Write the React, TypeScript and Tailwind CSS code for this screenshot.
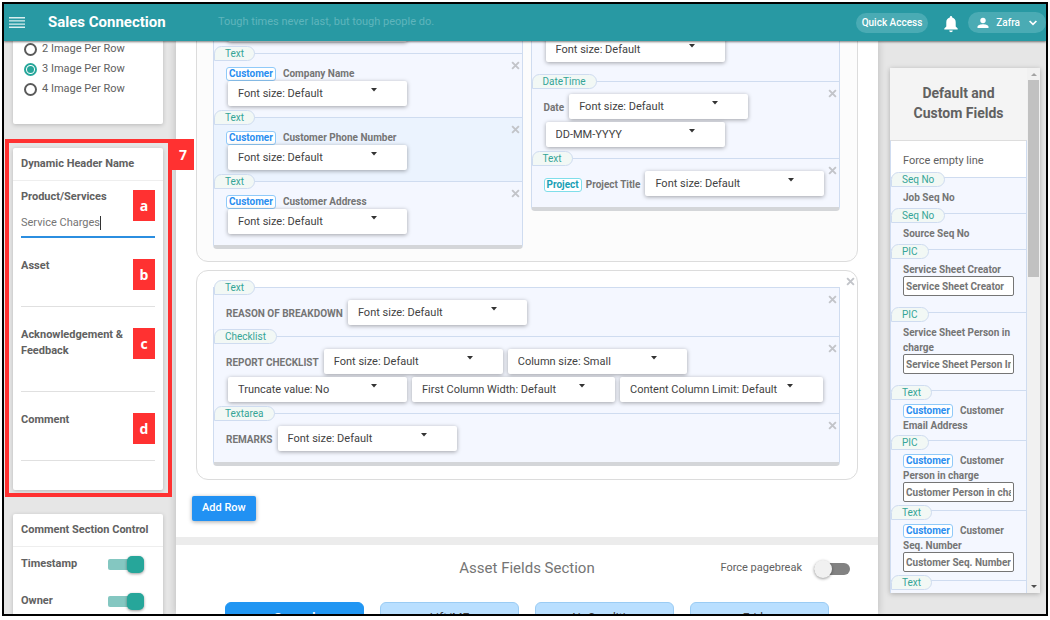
import React from "react";

const TAG_TONES = {
  customer: "border-[#90caf9] text-[#2b8ef0]",
  project: "border-[#80deea] text-[#1a9fb5]",
};

type Tone = keyof typeof TAG_TONES;

function Tag({ tone, children }: { tone: Tone; children: React.ReactNode }) {
  return (
    <span className={`inline-block rounded-[3px] border bg-white px-[2px] text-[10px] leading-3 font-bold ${TAG_TONES[tone]}`}>
      {children}
    </span>
  );
}

function TypeChip({ children }: { children: React.ReactNode }) {
  return (
    <span className="block h-[15px] w-fit rounded-lg rounded-bl-none border border-[#cfdcf0] bg-[#f2f8f5] px-[10px] text-[10px] leading-[14px] text-[#35a597]">
      {children}
    </span>
  );
}

function Close({ className }: { className: string }) {
  return (
    <button type="button" aria-label="Remove" className={`absolute text-[#c2c4c9] ${className}`}>
      <svg viewBox="0 0 8 8" className="size-[9px]" stroke="currentColor" strokeWidth="1.7">
        <path d="M1 1l6 6M7 1L1 7" />
      </svg>
    </button>
  );
}

function Dropdown({ value, wide = false }: { value: string; wide?: boolean }) {
  return (
    <span className={`relative block ${wide ? "w-[203px]" : "w-[179px]"}`}>
      <select
        aria-label={value}
        className="block h-[25px] w-full appearance-none rounded-[2px] bg-white px-[10px] pt-0.5 text-[11px] text-[#424242] shadow-[0_1px_4px_rgba(0,0,0,0.35)]"
      >
        <option>{value}</option>
      </select>
      <svg viewBox="0 0 6 4" className="pointer-events-none absolute top-[7px] right-[30px] h-1 w-1.5" fill="#333">
        <path d="M0 0h6L3 3.6z" />
      </svg>
    </span>
  );
}

function Field({
  type,
  tone,
  tag,
  name,
  stacked = false,
  active = false,
  children,
}: {
  type: string;
  tone?: Tone;
  tag?: string;
  name: string;
  stacked?: boolean;
  active?: boolean;
  children: React.ReactNode;
}) {
  return (
    <div className={`relative border-t border-[#cfdcf0] pb-[11px] ${active ? "bg-[#ebf3fe]" : "bg-[#f4f7ff]"}`}>
      <div className="-mt-2 h-4">
        <TypeChip>{type}</TypeChip>
      </div>
      <Close className="top-[7px] right-0.5" />
      <div className={`flex flex-wrap items-center gap-x-[5px] pl-[14px] ${stacked ? "pt-[4px]" : "gap-y-[3px] pt-1"}`}>
        <span className={`-ml-0.5 flex items-center text-[10px] leading-[15px] font-bold text-[#757575] ${stacked ? "w-full gap-[7px]" : "gap-1 pt-0.5"}`}>
          {tone && <Tag tone={tone}>{tag}</Tag>}
          {name}
        </span>
        {children}
      </div>
    </div>
  );
}

const COLUMN = "rounded-b-[4px] border-x border-b-4 border-x-[#cfdcf0] border-b-[#d4d6d9]";

function Switch({ label }: { label: string }) {
  return (
    <label className="flex h-[37px] items-center justify-between pr-[19px] pb-[3px] pl-2 text-[11px] font-bold text-[#616161]">
      {label}
      <input
        type="checkbox"
        defaultChecked
        className="relative h-[11px] w-9 appearance-none rounded-[2px] bg-[#84c7c1] before:absolute before:-top-[3px] before:right-0 before:size-[17px] before:rounded-[5px] before:bg-[#26a69a] before:shadow-[0_1px_3px_rgba(0,0,0,0.4)]"
      />
    </label>
  );
}

function Marker({ className, children }: { className: string; children: React.ReactNode }) {
  return (
    <span className={`absolute grid h-[31px] w-[22px] place-items-center bg-[#ff3131] font-['Open_Sans',sans-serif] text-[14px] font-bold text-white ${className}`}>
      {children}
    </span>
  );
}

function HeaderName({ label, marker, value }: { label: string; marker: string; value?: string }) {
  return (
    <div className="relative">
      <label htmlFor={`header-${marker}`} className="block w-28 text-[11px] leading-4 font-bold text-[#616161]">
        {label}
      </label>
      <div className={`flex h-[33px] items-center ${value ? "border-b-2 border-[#2b8ee0]" : "border-b border-[#e0e0e0]"}`}>
        <input
          id={`header-${marker}`}
          defaultValue={value}
          className={`pt-[5px] text-[11px] text-[#757575] outline-none ${value ? "[field-sizing:content]" : "w-full"}`}
        />
        {value && <span className="mt-1 h-[14px] w-px bg-[#333]" />}
      </div>
      <Marker className="top-px right-0">{marker}</Marker>
    </div>
  );
}

const CARD = "rounded-[2px] bg-white shadow-[0_1px_4px_rgba(0,0,0,0.2)]";
const CARD_TITLE = "flex h-[33px] items-center border-b border-[#eeeeee] px-2 text-[11px] font-bold text-[#616161]";

function Sidebar() {
  return (
    <aside className="z-10 flex w-[172px] shrink-0 flex-col gap-6 pr-[13px] pl-[9px]">
      <div className={`${CARD} -mt-2 px-[11px] pt-1.5 pb-[25px]`}>
        {[2, 3, 4].map((n) => (
          <label key={n} className="flex h-5 items-center gap-[5px] text-[11px] text-[#616161]">
            <input
              type="radio"
              name="images"
              defaultChecked={n === 3}
              className="grid size-[13px] appearance-none place-items-center rounded-full border-2 border-[#5a5a5a] checked:border-[#26a69a] checked:before:size-[7px] checked:before:rounded-full checked:before:bg-[#26a69a]"
            />
            {n} Image Per Row
          </label>
        ))}
      </div>

      <div className="relative">
        <div className={CARD}>
          <h2 className={CARD_TITLE}>Dynamic Header Name</h2>
          <div className="flex flex-col gap-5 px-2 pt-2 pb-[29px]">
            <HeaderName label="Product/Services" marker="a" value="Service Charges" />
            <HeaderName label="Asset" marker="b" />
            <HeaderName label="Acknowledgement & Feedback" marker="c" />
            <HeaderName label="Comment" marker="d" />
          </div>
        </div>
        <div className="pointer-events-none absolute -top-[9px] -right-[9px] -bottom-[7px] -left-2 border-4 border-[#ff3131]">
          <Marker className="-top-1 left-full ml-1">7</Marker>
        </div>
      </div>

      <div className={CARD}>
        <h2 className={CARD_TITLE}>Comment Section Control</h2>
        <Switch label="Timestamp" />
        <Switch label="Owner" />
      </div>
    </aside>
  );
}

const FONT = "Font size: Default";

function Main() {
  return (
    <main className="min-w-0 flex-1 bg-[#ececec] shadow-[0_0_8px_rgba(0,0,0,0.2)]">
      <section className="bg-white px-5 pb-4">
        <div className="-mt-[25px] grid grid-cols-2 items-start gap-2 rounded-b-xl border border-[#dcdcdc] bg-[#fcfcfc] pr-[17px] pb-3 pl-4">
          <div className={COLUMN}>
            <div className="bg-[#f4f7ff] pb-[11px] pl-[14px]">
              <Dropdown value={FONT} />
            </div>
            <Field type="Text" tone="customer" tag="Customer" name="Company Name" stacked>
              <Dropdown value={FONT} />
            </Field>
            <Field type="Text" tone="customer" tag="Customer" name="Customer Phone Number" stacked active>
              <Dropdown value={FONT} />
            </Field>
            <Field type="Text" tone="customer" tag="Customer" name="Customer Address" stacked>
              <Dropdown value={FONT} />
            </Field>
          </div>
          <div className={COLUMN}>
            <div className="bg-[#f4f7ff] pt-5 pb-[19px] pl-[14px]">
              <Dropdown value={FONT} />
            </div>
            <Field type="DateTime" name="Date">
              <Dropdown value={FONT} />
              <Dropdown value="DD-MM-YYYY" />
            </Field>
            <Field type="Text" tone="project" tag="Project" name="Project Title">
              <Dropdown value={FONT} />
            </Field>
          </div>
        </div>

        <div className="relative mt-2 rounded-xl border border-[#dcdcdc] bg-white pt-4 pr-[17px] pb-[13px] pl-4">
          <Close className="top-[6px] right-0.5" />
          <div className={COLUMN}>
            <Field type="Text" name="REASON OF BREAKDOWN">
              <Dropdown value={FONT} />
            </Field>
            <Field type="Checklist" name="REPORT CHECKLIST">
              <Dropdown value={FONT} />
              <Dropdown value="Column size: Small" />
              <Dropdown value="Truncate value: No" />
              <Dropdown value="First Column Width: Default" wide />
              <Dropdown value="Content Column Limit: Default" wide />
            </Field>
            <Field type="Textarea" name="REMARKS">
              <Dropdown value={FONT} />
            </Field>
          </div>
        </div>

        <button
          type="button"
          className="mt-4 -ml-1 block h-[25px] rounded-[2px] bg-[#2191f3] px-[10px] text-[11px] font-medium text-white shadow-[0_1px_4px_rgba(0,0,0,0.35)]"
        >
          Add Row
        </button>
      </section>

      <section className="mt-2 bg-white px-7">
        <div className="grid h-[57px] grid-cols-[1fr_auto_1fr] items-center pb-[10px]">
          <h2 className="col-start-2 text-[15px] text-[#757575]">Asset Fields Section</h2>
          <label className="flex items-center justify-end gap-3 text-[11px] text-[#616161]">
            Force pagebreak
            <input
              type="checkbox"
              className="relative h-3 w-9 appearance-none rounded-full bg-[#828282] before:absolute before:-top-[3px] before:left-0 before:size-[18px] before:rounded-full before:bg-[#f1f1f1] before:shadow-[0_1px_3px_rgba(0,0,0,0.4)]"
            />
          </label>
        </div>
        <div className="flex items-start justify-between gap-[15px]">
          <button type="button" aria-label="Previous" className="mt-[9px] w-1.5 text-[11px] text-[#616161]">‹</button>
          <div className="grid flex-1 grid-cols-4 gap-4">
            {["General", "Lift/ME", "Air Condition", "Fridge"].map((name, i) => (
              <button
                key={name}
                type="button"
                className={`h-8 rounded-t-md border text-[12px] ${i === 0 ? "border-[#2196f3] bg-[#2196f3] font-bold text-white" : "border-[#9bccf4] bg-[#b9dfff] text-[#424242]"}`}
              >
                {name}
              </button>
            ))}
          </div>
          <button type="button" aria-label="Next" className="mt-[9px] w-1.5 text-[11px] text-[#616161]">›</button>
        </div>
      </section>
    </main>
  );
}

function ListItem({
  type,
  name,
  tone,
  tag,
  input,
  pad,
}: {
  type: string;
  name: string;
  tone?: Tone;
  tag?: string;
  input?: string;
  pad: string;
}) {
  return (
    <li className={`border-t border-[#cfdcf0] bg-[#f4f7ff] ${pad}`}>
      <div className="-mt-[6px] h-4">
        <TypeChip>{type}</TypeChip>
      </div>
      <label className="block px-3 pt-[2px] text-[10px] leading-[15px] font-bold text-[#757575]">
        {tone && (
          <span className="mr-[7px]">
            <Tag tone={tone}>{tag}</Tag>
          </span>
        )}
        {name}
        {input && (
          <input
            defaultValue={input}
            className="-mt-px block h-5 w-full rounded-[2px] border border-[#757575] bg-white px-[2px] outline-none"
          />
        )}
      </label>
    </li>
  );
}

function FieldsPanel() {
  return (
    <aside className="flex w-[168px] shrink-0 flex-col pt-[27px] pr-[6px] pb-[21px] pl-3">
      <div className="flex min-h-0 flex-1 bg-[#f4f4f4] shadow-[0_1px_5px_rgba(0,0,0,0.25)]">
        <div className="min-w-0 flex-1 overflow-hidden">
          <h2 className="flex h-[72px] items-center justify-center px-5 pb-0.5 text-center text-[14px] leading-5 font-bold text-[#616161]">
            Default and Custom Fields
          </h2>
          <ul className="border-x border-t border-x-[#cfdcf0] border-t-[#dddddd] bg-white">
            <li className="h-9 pt-[10px] pl-3 text-[11px] leading-5 text-[#616161]">Force empty line</li>
            <ListItem type="Seq No" name="Job Seq No" pad="pb-2" />
            <ListItem type="Seq No" name="Source Seq No" pad="pb-2" />
            <ListItem type="PIC" name="Service Sheet Creator" input="Service Sheet Creator" pad="pb-4" />
            <ListItem type="PIC" name="Service Sheet Person in charge" input="Service Sheet Person In Charge" pad="pb-4" />
            <ListItem type="Text" name="Customer Email Address" tone="customer" tag="Customer" pad="pb-[7px]" />
            <ListItem type="PIC" name="Customer Person in charge" tone="customer" tag="Customer" input="Customer Person in charge" pad="pb-2" />
            <ListItem type="Text" name="Customer Seq. Number" tone="customer" tag="Customer" input="Customer Seq. Number" pad="pb-2" />
            <ListItem type="Text" name="Project Title" tone="project" tag="Project" pad="pb-2" />
          </ul>
        </div>
        <div className="flex w-[13px] shrink-0 flex-col items-center bg-[#f1f1f1]">
          <svg viewBox="0 0 12 12" className="size-3 shrink-0" fill="#a3a3a3">
            <path d="M3 8h6L6 5z" />
          </svg>
          <div className="h-[197px] w-[11px] bg-[#c1c1c1]" />
          <svg viewBox="0 0 12 12" className="mt-auto size-3 shrink-0" fill="#505050">
            <path d="M3 4h6L6 7z" />
          </svg>
        </div>
      </div>
    </aside>
  );
}

function TopBar() {
  return (
    <header className="z-20 flex h-[37px] shrink-0 items-center bg-[#2899a3] pl-[5px] text-white shadow-[0_1px_2px_rgba(0,0,0,0.5)]">
      <button type="button" aria-label="Menu">
        <svg viewBox="0 0 16 11" className="h-[11px] w-4" fill="#d9eff0">
          <path d="M0 0h16v1.4H0zM0 3.2h16v1.4H0zM0 6.4h16v1.4H0zM0 9.6h16V11H0z" />
        </svg>
      </button>
      <h1 className="ml-[23px] w-[170px] text-[15px] font-bold">Sales Connection</h1>
      <p className="flex-1 text-[11px] text-[#5fb5bc]">Tough times never last, but tough people do.</p>
      <button type="button" className="h-5 rounded-full bg-[#4aabb4] px-[6px] text-[10px] font-medium">
        Quick Access
      </button>
      <button type="button" aria-label="Notifications" className="mr-[9px] ml-[15px] pt-0.5">
        <svg viewBox="0 0 16 18" className="h-[18px] w-4" fill="white">
          <path d="M8 1a1.2 1.2 0 0 1 1.2 1.2v.4C11.500 3.200 12.700 5 12.700 7.300V11.500L14.700 13.500V14.500H1.300V13.500L3.300 11.500V7.300C3.300 5 4.500 3.200 6.800 2.600V2.200A1.200 1.200 0 0 1 8 1zM6.200 15.500h3.600a1.800 1.800 0 0 1-3.600 0z" />
        </svg>
      </button>
      <button type="button" className="flex h-[21px] items-center rounded-full bg-[#4aabb4] pr-[9px] pl-[9px] text-[10px] font-medium">
        <svg viewBox="0 0 12 12" className="size-3" fill="white">
          <circle cx="6" cy="3.500" r="2.700" />
          <path d="M.5 11V9.800C.5 8 3.500 7.200 6 7.200s5.500.8 5.500 2.600V11z" />
        </svg>
        <span className="mr-[9px] ml-[7px]">Zafra</span>
        <svg viewBox="0 0 8 6" className="h-1.5 w-2" fill="none" stroke="white" strokeWidth="1.700">
          <path d="M.6 1L4 4.400 7.400 1" />
        </svg>
      </button>
    </header>
  );
}

export default function App() {
  return (
    <div className="h-screen bg-white pt-0.5 pr-[2px] pb-1 pl-0.5 font-[Roboto,sans-serif]">
      <div className="flex h-full flex-col overflow-hidden border-2 border-black bg-[#e6e6e6]">
        <TopBar />
        <div className="flex min-h-0 flex-1 overflow-hidden">
          <Sidebar />
          <Main />
          <FieldsPanel />
        </div>
      </div>
    </div>
  );
}
